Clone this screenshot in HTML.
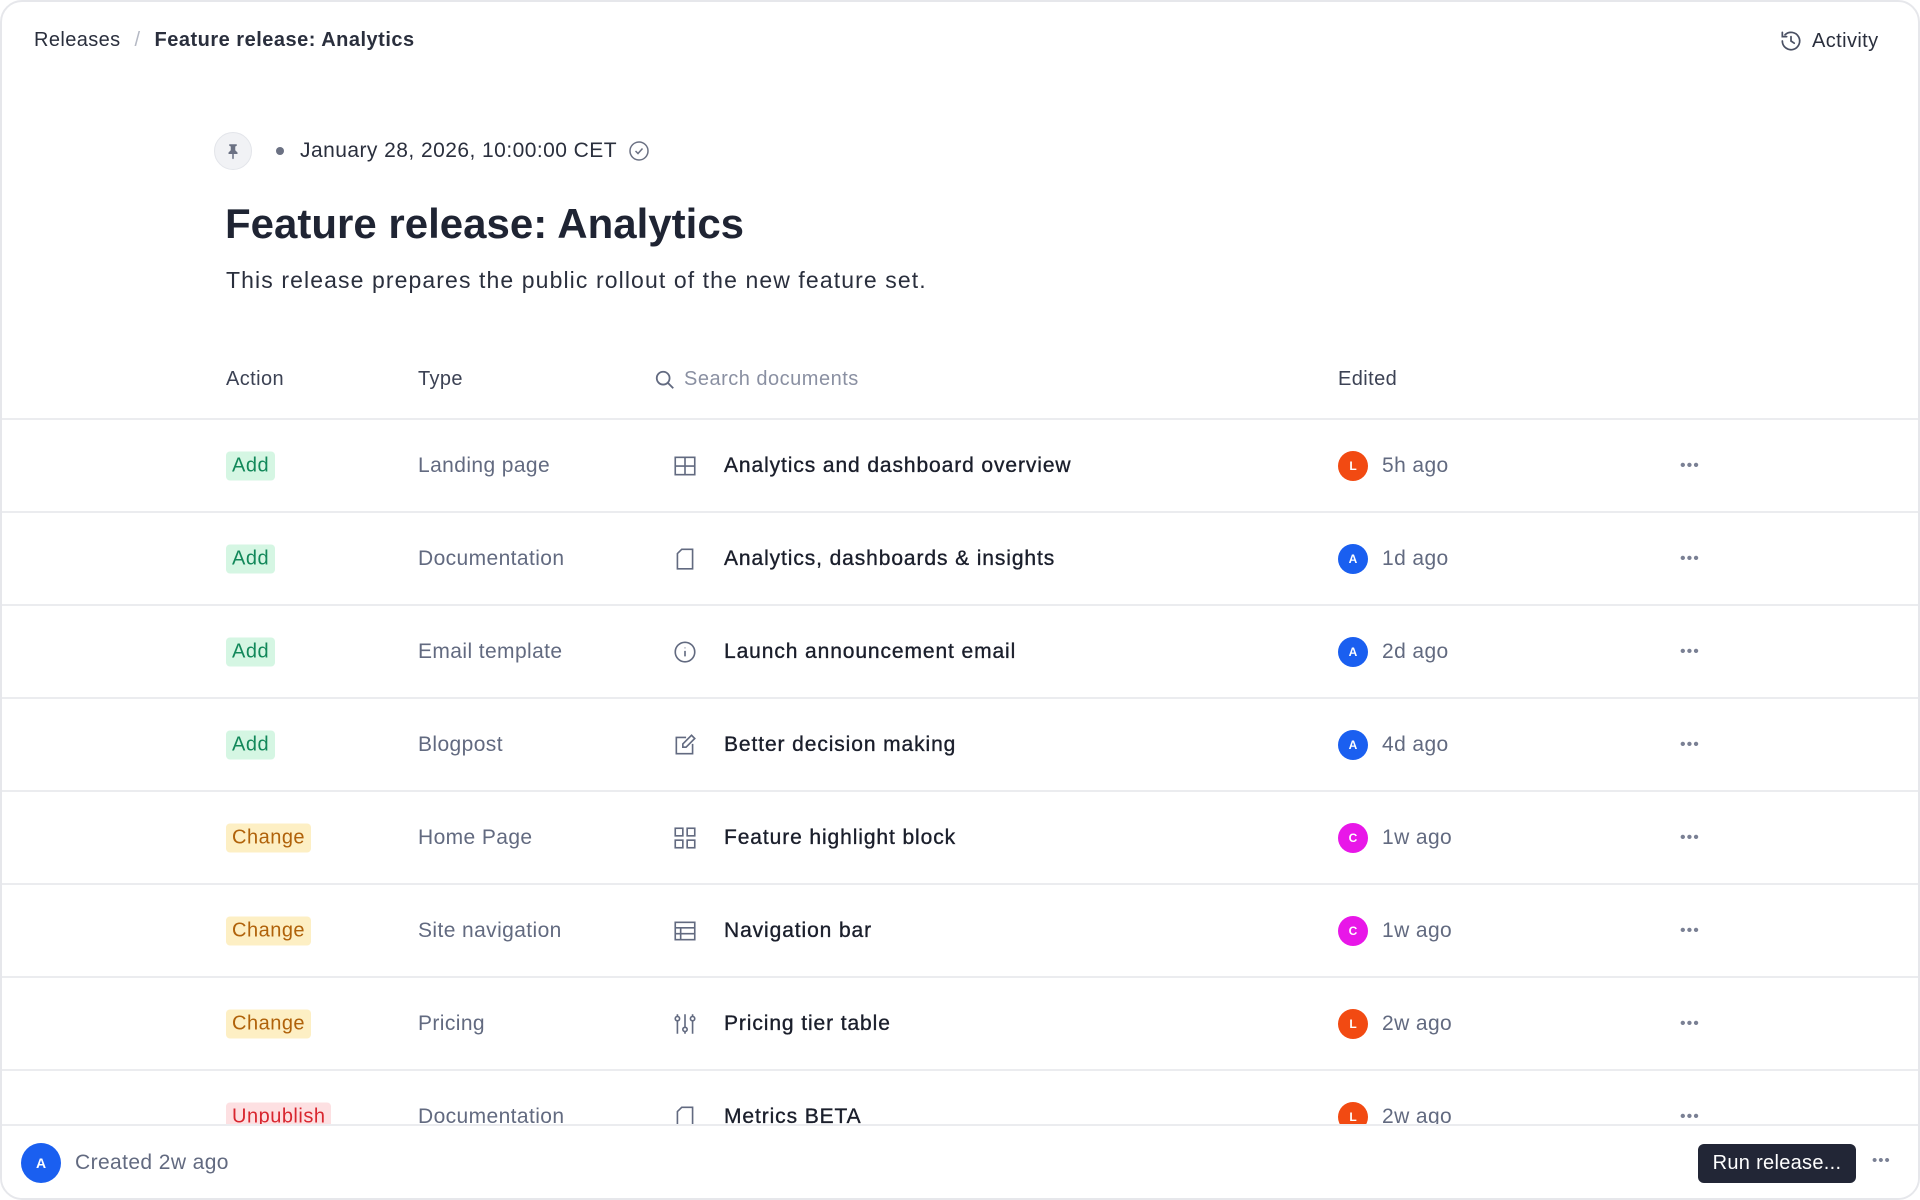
<!DOCTYPE html>
<html><head><meta charset="utf-8"><style>
*{box-sizing:border-box;margin:0;padding:0}
html,body{width:1920px;height:1200px;overflow:hidden;background:#fff;font-family:"Liberation Sans",Arial,sans-serif;color:#1f2433}
.frame{position:absolute;left:0;top:0;width:1920px;height:1200px;border:2px solid #e6e7eb;border-radius:22px;overflow:hidden;background:#fff}
.abs{position:absolute;white-space:nowrap}
.row{position:absolute;left:0;width:1920px;height:93px;border-top:2px solid #ebecef}
.row>*{position:absolute;top:50%;transform:translateY(-50%);white-space:nowrap}
.badge{left:224px;font-size:20px;padding:3px 6px;border-radius:4px;letter-spacing:.5px}
.add{background:#d5f6e3;color:#12885a}
.chg{background:#fdefc4;color:#b0620a}
.unp{background:#fde0e2;color:#d8262f}
.type{left:416px;font-size:21px;color:#626a80;letter-spacing:.4px}
.ic{left:670px;width:26px;height:26px}
.title{left:722px;font-size:21px;color:#1a1e2b;letter-spacing:.9px;-webkit-text-stroke:.35px #1a1e2b}
.av{left:1336px;width:30px;height:30px;border-radius:50%;color:#fff;font-size:12px;font-weight:bold;text-align:center;line-height:30px}
.time{left:1380px;font-size:21px;color:#626a80;letter-spacing:.4px}
.dots{left:1678px;font-size:16px;color:#7a8094;letter-spacing:1px}
svg{display:block}
</style></head><body><div class="frame">
<div class="abs" style="left:32px;top:27px;font-size:20px;color:#2a2f3d;letter-spacing:.4px">Releases <span style="color:#b5b9c4;margin:0 8px">/</span> <b style="font-weight:bold;letter-spacing:.5px">Feature release: Analytics</b></div>
<div class="abs" style="left:1776px;top:26px;font-size:20px;color:#2a2f3d;display:flex;align-items:center;gap:8px;letter-spacing:.4px">
<svg width="26" height="26" viewBox="0 0 24 24" fill="none" stroke="#4a5063" stroke-width="1.6" stroke-linecap="round"><path d="M4 12a8 8 0 1 0 2.5-5.8"/><path d="M4 4v4h4"/><path d="M12 8v4l3 2"/></svg>Activity</div>

<div class="abs" style="left:212px;top:130px;width:38px;height:38px;border-radius:50%;background:#f1f2f5;border:1px solid #e3e5ea"><svg style="margin:9px" width="18" height="18" viewBox="0 0 24 24" fill="#6b7183"><path d="M7 3h10v2l-2 1v5l3 3v2h-5v6l-1 1-1-1v-6H6v-2l3-3V6L7 5z"/></svg></div>
<div class="abs" style="left:274px;top:145px;width:8px;height:8px;border-radius:50%;background:#6b7183"></div>
<div class="abs" style="left:298px;top:137px;font-size:21px;color:#2a2f3d;display:flex;align-items:center;gap:10px;letter-spacing:.45px">January 28, 2026, 10:00:00 CET <svg width="24" height="24" viewBox="0 0 24 24" fill="none" stroke="#6b7183" stroke-width="1.5"><circle cx="12" cy="12" r="9"/><path d="M8.5 12l2.5 2.5 4.5-5"/></svg></div>
<div class="abs" style="left:223px;top:198px;font-size:42px;font-weight:bold;color:#1f2433">Feature release: Analytics</div>
<div class="abs" style="left:224px;top:265px;font-size:23px;color:#2a2f3d;letter-spacing:1.1px">This release prepares the public rollout of the new feature set.</div>

<div class="abs" style="left:224px;top:366px;font-size:20px;color:#3c4254;letter-spacing:.4px">Action</div>
<div class="abs" style="left:416px;top:366px;font-size:20px;color:#3c4254;letter-spacing:.4px">Type</div>
<div class="abs" style="left:652px;top:366px;font-size:20px;color:#8a90a2;display:flex;align-items:center;gap:8px;letter-spacing:.5px"><svg width="22" height="22" viewBox="0 0 24 24" fill="none" stroke="#626a80" stroke-width="2"><circle cx="10" cy="10" r="7"/><path d="M15 15l6 6"/></svg>Search documents</div>
<div class="abs" style="left:1336px;top:366px;font-size:20px;color:#3c4254;letter-spacing:.4px">Edited</div>

<div style="position:absolute;left:0;top:0;width:1920px;height:1123px;overflow:hidden">
<div class="row" style="top:416px"><span class="badge add">Add</span><span class="type">Landing page</span>
<svg class="ic" viewBox="0 0 24 24" fill="none" stroke="#626a80" stroke-width="1.5"><rect x="3" y="4" width="18" height="16"/><path d="M3 12h18M12 4v16"/></svg>
<span class="title">Analytics and dashboard overview</span><span class="av" style="background:#f24a12">L</span><span class="time">5h ago</span><span class="dots">•••</span></div>
<div class="row" style="top:509px"><span class="badge add">Add</span><span class="type">Documentation</span>
<svg class="ic" viewBox="0 0 24 24" fill="none" stroke="#626a80" stroke-width="1.5"><path d="M9 3h10v18H5V7z"/></svg>
<span class="title">Analytics, dashboards &amp; insights</span><span class="av" style="background:#1a5ff0">A</span><span class="time">1d ago</span><span class="dots">•••</span></div>
<div class="row" style="top:602px"><span class="badge add">Add</span><span class="type">Email template</span>
<svg class="ic" viewBox="0 0 24 24" fill="none" stroke="#626a80" stroke-width="1.5"><circle cx="12" cy="12" r="9"/><path d="M12 11v5M12 8v.5"/></svg>
<span class="title">Launch announcement email</span><span class="av" style="background:#1a5ff0">A</span><span class="time">2d ago</span><span class="dots">•••</span></div>
<div class="row" style="top:695px"><span class="badge add">Add</span><span class="type">Blogpost</span>
<svg class="ic" viewBox="0 0 24 24" fill="none" stroke="#626a80" stroke-width="1.5"><path d="M13 5H4v15h15v-9"/><path d="M18 3l3 3-8 8H10v-3z"/></svg>
<span class="title">Better decision making</span><span class="av" style="background:#1a5ff0">A</span><span class="time">4d ago</span><span class="dots">•••</span></div>
<div class="row" style="top:788px"><span class="badge chg">Change</span><span class="type">Home Page</span>
<svg class="ic" viewBox="0 0 24 24" fill="none" stroke="#626a80" stroke-width="1.5"><rect x="3" y="3" width="7" height="7"/><rect x="14" y="3" width="7" height="7"/><rect x="3" y="14" width="7" height="7"/><rect x="14" y="14" width="7" height="7"/></svg>
<span class="title">Feature highlight block</span><span class="av" style="background:#e817e8">C</span><span class="time">1w ago</span><span class="dots">•••</span></div>
<div class="row" style="top:881px"><span class="badge chg">Change</span><span class="type">Site navigation</span>
<svg class="ic" viewBox="0 0 24 24" fill="none" stroke="#626a80" stroke-width="1.5"><rect x="3" y="4" width="18" height="16"/><path d="M3 9h18M3 14.5h18M8 9v11"/></svg>
<span class="title">Navigation bar</span><span class="av" style="background:#e817e8">C</span><span class="time">1w ago</span><span class="dots">•••</span></div>
<div class="row" style="top:974px"><span class="badge chg">Change</span><span class="type">Pricing</span>
<svg class="ic" viewBox="0 0 24 24" fill="none" stroke="#626a80" stroke-width="1.5"><path d="M5 9v12M5 3v2M12 3v12M12 19v2M19 9v12M19 3v2"/><circle cx="5" cy="7" r="2"/><circle cx="12" cy="17" r="2"/><circle cx="19" cy="7" r="2"/></svg>
<span class="title">Pricing tier table</span><span class="av" style="background:#f24a12">L</span><span class="time">2w ago</span><span class="dots">•••</span></div>
<div class="row" style="top:1067px"><span class="badge unp">Unpublish</span><span class="type">Documentation</span>
<svg class="ic" viewBox="0 0 24 24" fill="none" stroke="#626a80" stroke-width="1.5"><path d="M9 3h10v18H5V7z"/></svg>
<span class="title">Metrics BETA</span><span class="av" style="background:#f24a12">L</span><span class="time">2w ago</span><span class="dots">•••</span></div>
</div>

<div style="position:absolute;left:0;top:1122px;width:1920px;height:78px;border-top:2px solid #ebecef;background:#fff"></div>
<div class="abs" style="left:19px;top:1141px;width:40px;height:40px;border-radius:50%;background:#1a5ff0;color:#fff;font-size:14px;font-weight:bold;text-align:center;line-height:40px">A</div>
<div class="abs" style="left:73px;top:1149px;font-size:21px;color:#626a80;letter-spacing:.4px">Created 2w ago</div>
<div class="abs" style="left:1696px;top:1142px;width:158px;height:39px;border-radius:6px;background:#222636;color:#fff;font-size:20px;text-align:center;line-height:39px;letter-spacing:.3px">Run release...</div>
<div class="abs" style="left:1870px;top:1150px;font-size:15px;color:#7a8094;letter-spacing:1px">•••</div>
</div></body></html>
